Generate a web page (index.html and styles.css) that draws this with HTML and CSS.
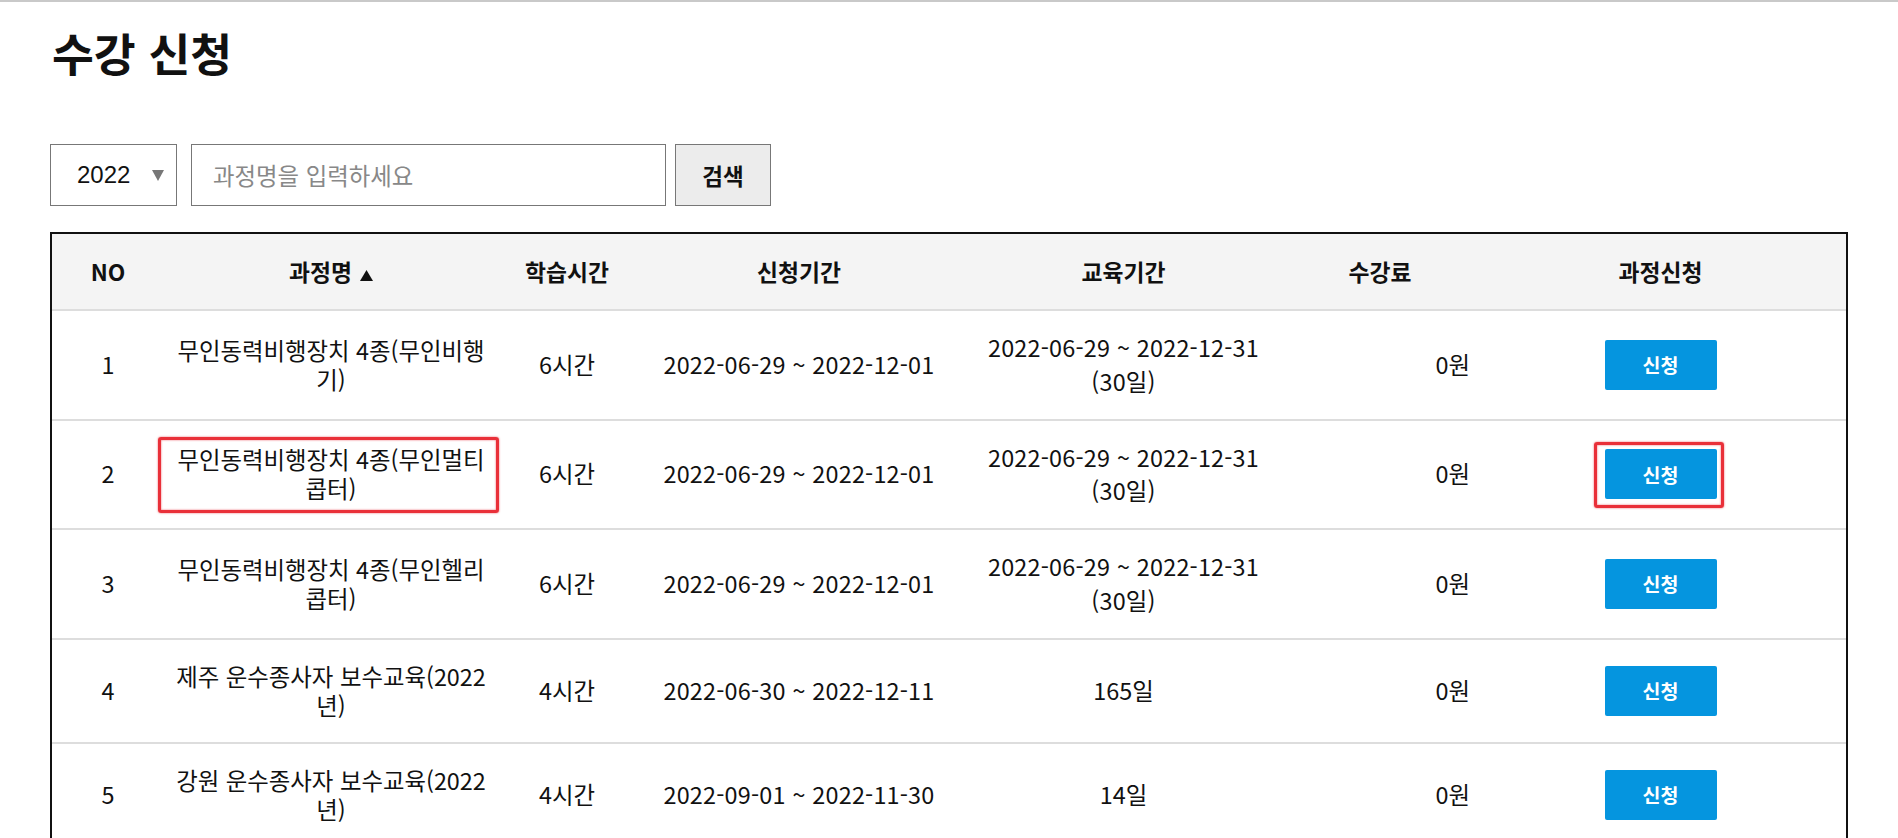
FILE: index.html
```html
<!DOCTYPE html>
<html lang="ko">
<head>
<meta charset="utf-8">
<title>수강 신청</title>
<link rel="stylesheet" href="styles.css">
</head>
<body>
<div class="topline"></div>
<main class="page">
  <h1 class="title">수강 신청</h1>

  <form class="search">
    <div class="select">
      <span class="select-value">2022</span>
      <svg class="caret" width="12" height="11" viewBox="0 0 12 11"><polygon points="0,0 12,0 6,11" fill="#777"/></svg>
    </div>
    <input class="keyword" type="text" placeholder="과정명을 입력하세요">
    <button class="search-btn" type="button">검색</button>
  </form>

  <div class="table-wrap">
    <table class="course-table">
      <colgroup>
        <col class="c-no"><col class="c-name"><col class="c-time"><col class="c-apply"><col class="c-edu"><col class="c-fee"><col class="c-btn">
      </colgroup>
      <thead>
        <tr>
          <th>NO</th>
          <th>과정명<svg class="sort" width="13" height="11" viewBox="0 0 13 11"><polygon points="6.5,0 13,11 0,11" fill="#111"/></svg></th>
          <th>학습시간</th>
          <th>신청기간</th>
          <th>교육기간</th>
          <th>수강료</th>
          <th>과정신청</th>
        </tr>
      </thead>
      <tbody>
        <tr>
          <td>1</td>
          <td class="name">무인동력비행장치 4종(무인비행기)</td>
          <td>6시간</td>
          <td class="date">2022-06-29 ~ 2022-12-01</td>
          <td class="date">2022-06-29 ~ 2022-12-31<br>(30일)</td>
          <td class="fee">0원</td>
          <td><button class="apply-btn" type="button">신청</button></td>
        </tr>
        <tr>
          <td>2</td>
          <td class="name">무인동력비행장치 4종(무인멀티콥터)</td>
          <td>6시간</td>
          <td class="date">2022-06-29 ~ 2022-12-01</td>
          <td class="date">2022-06-29 ~ 2022-12-31<br>(30일)</td>
          <td class="fee">0원</td>
          <td><button class="apply-btn" type="button">신청</button></td>
        </tr>
        <tr>
          <td>3</td>
          <td class="name">무인동력비행장치 4종(무인헬리콥터)</td>
          <td>6시간</td>
          <td class="date">2022-06-29 ~ 2022-12-01</td>
          <td class="date">2022-06-29 ~ 2022-12-31<br>(30일)</td>
          <td class="fee">0원</td>
          <td><button class="apply-btn" type="button">신청</button></td>
        </tr>
        <tr>
          <td>4</td>
          <td class="name">제주 운수종사자 보수교육(2022년)</td>
          <td>4시간</td>
          <td class="date">2022-06-30 ~ 2022-12-11</td>
          <td>165일</td>
          <td class="fee">0원</td>
          <td><button class="apply-btn" type="button">신청</button></td>
        </tr>
        <tr>
          <td>5</td>
          <td class="name">강원 운수종사자 보수교육(2022년)</td>
          <td>4시간</td>
          <td class="date">2022-09-01 ~ 2022-11-30</td>
          <td>14일</td>
          <td class="fee">0원</td>
          <td><button class="apply-btn" type="button">신청</button></td>
        </tr>
      </tbody>
    </table>
    <div class="mark mark-name"></div>
    <div class="mark mark-btn"></div>
  </div>
</main>
</body>
</html>
```

FILE: styles.css
```css
* { box-sizing: border-box; }

html, body {
  margin: 0;
  padding: 0;
  background: #fff;
}

body {
  font-family: "Noto Sans CJK KR", "Noto Sans", sans-serif;
  color: #111;
  overflow: hidden;
}

.topline {
  height: 2px;
  background: #c9c9c9;
}

.page {
  padding: 0 50px;
}

.title {
  margin: 17px 0 0 2px;
  font-size: 45.5px;
  font-weight: 700;
  line-height: 66px;
  letter-spacing: 0;
}

.search {
  display: flex;
  align-items: stretch;
  margin-top: 59px;
  height: 62px;
}

.select {
  width: 127px;
  border: 1px solid #777;
  display: flex;
  align-items: center;
  justify-content: space-between;
  padding: 0 12px 0 26px;
  font-family: "Liberation Sans", Arial, sans-serif;
  font-size: 24px;
  color: #111;
}

.caret { display: block; margin-top: 1px; }

.keyword {
  width: 475px;
  margin-left: 14px;
  border: 1px solid #777;
  padding: 0 0 0 21px;
  font-family: "Noto Sans CJK KR", "Noto Sans", sans-serif;
  font-size: 23.4px;
  color: #111;
  outline: none;
}

.keyword::placeholder { color: #888; }

.search-btn {
  width: 96px;
  margin-left: 9px;
  border: 1px solid #777;
  background: #ececec;
  font-family: "Noto Sans CJK KR", "Noto Sans", sans-serif;
  font-size: 22.5px;
  font-weight: 700;
  color: #111;
  padding: 0;
}

.table-wrap {
  position: relative;
  margin-top: 26px;
}

.course-table {
  width: 100%;
  table-layout: fixed;
  border-collapse: separate;
  border-spacing: 0;
  border: 2px solid #111;
}

.c-no { width: 112px; }
.c-name { width: 334px; }
.c-time { width: 138px; }
.c-apply { width: 326px; }
.c-edu { width: 323px; }
.c-fee { width: 190px; }
.c-btn { width: 371px; }

.course-table th {
  height: 77px;
  background: #f4f4f4;
  border-bottom: 2px solid #ddd;
  font-size: 22.8px;
  font-weight: 700;
  text-align: center;
  vertical-align: middle;
  padding: 0;
}

.sort {
  margin-left: 8px;
  vertical-align: 0;
}

.course-table td {
  border-bottom: 2px solid #ddd;
  padding: 20px 0;
  font-size: 23.4px;
  line-height: 33.8px;
  text-align: center;
  vertical-align: middle;
}

.course-table td.name {
  padding: 22px 9px;
  line-height: 29px;
  word-break: break-all;
}

.course-table td.date {
  letter-spacing: 0.2px;
}

.course-table td.fee {
  text-align: right;
  padding-right: 5px;
}

.apply-btn {
  width: 112px;
  height: 50px;
  border: none;
  border-radius: 2px;
  background: #0595df;
  color: #fff;
  font-family: "Noto Sans CJK KR", "Noto Sans", sans-serif;
  font-size: 19.5px;
  font-weight: 700;
  padding: 0;
  display: block;
  margin: 0 auto;
}

.mark {
  position: absolute;
  border: 3px solid #e8252f;
  border-radius: 3px;
  box-shadow: 0 0 2px rgba(232, 37, 47, 0.8), inset 0 0 2px rgba(232, 37, 47, 0.8);
  opacity: 0.95;
}

.mark-name {
  left: 108px;
  top: 205px;
  width: 341px;
  height: 76px;
}

.mark-btn {
  left: 1544px;
  top: 210px;
  width: 130px;
  height: 66px;
}
```
